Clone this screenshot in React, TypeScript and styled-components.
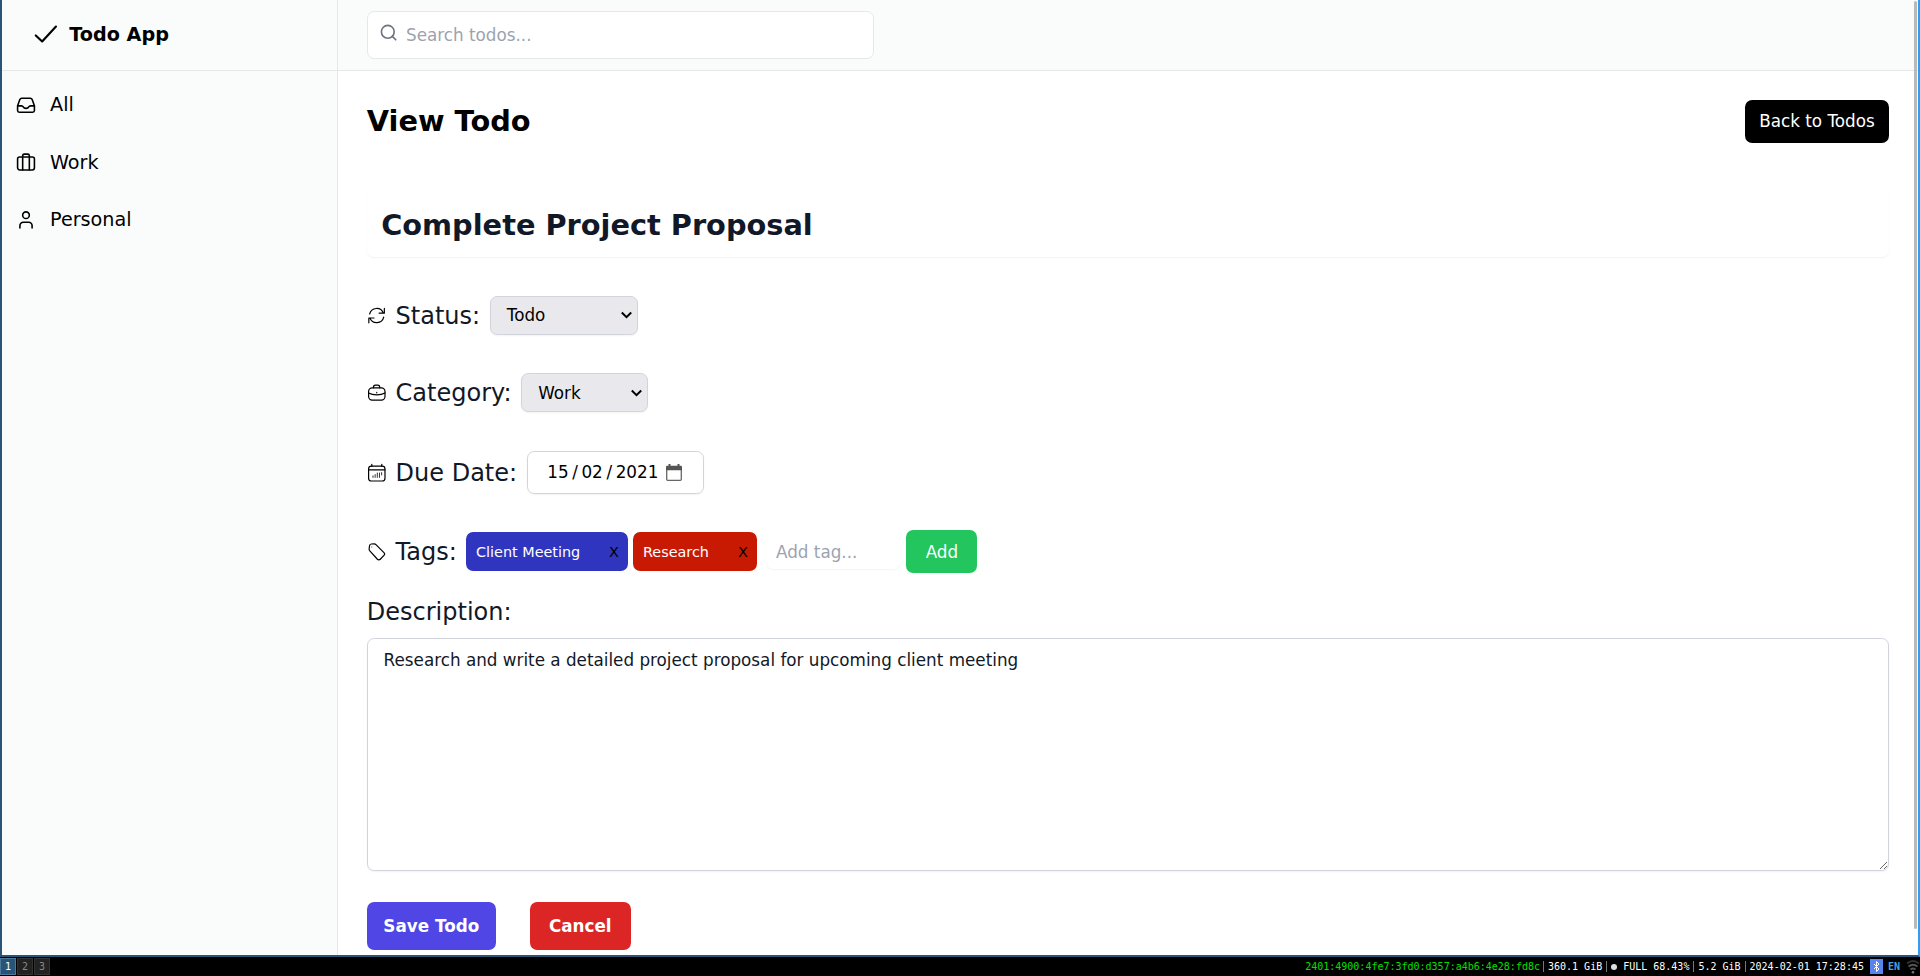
import React from 'react';
import styled, { createGlobalStyle, css } from 'styled-components';

const GlobalStyle = createGlobalStyle`
  *, *::before, *::after { box-sizing: border-box; }
  html, body { margin: 0; padding: 0; }
  body { background: #000; overflow: hidden; }
  body, button, input, textarea { font-family: "DejaVu Sans", sans-serif; }
`;

const Desktop = styled.div`
  display: flex;
  flex-direction: column;
  width: 1920px;
  height: 976px;
`;

const Window = styled.div`
  display: flex;
  height: 957px;
  border: solid #285577;
  border-width: 0 2px 2px;
  border-right-color: #2e9ef4;
  background: #fff;
  overflow: hidden;
`;

const Sidebar = styled.aside`
  width: 336px;
  border-right: 1px solid #e5e7eb;
  background: #fafcfb;
`;

const Brand = styled.div`
  display: flex;
  align-items: center;
  gap: 10px;
  height: 71px;
  padding: 0 0 1px 28.5px;
  border-bottom: 1px solid #e5e7eb;
  font-size: 19.2px;
  font-weight: 700;
`;

const Nav = styled.nav`
  display: flex;
  flex-direction: column;
  padding: 5px 0 0 13.5px;
`;

const NavItem = styled.a`
  display: flex;
  align-items: center;
  gap: 14.5px;
  height: 57.5px;
  font-size: 19.2px;
  color: #000;
`;

const Main = styled.main`
  flex: 1;
  min-width: 0;
`;

const Header = styled.header`
  height: 71px;
  padding: 11px 28.8px;
  border-bottom: 1px solid #e5e7eb;
  background: #fafcfb;
`;

const SearchBox = styled.div`
  display: flex;
  align-items: flex-start;
  gap: 8px;
  width: 507px;
  height: 48px;
  padding: 11px 0 0 11px;
  border: 1px solid #e5e7eb;
  border-radius: 7.2px;
  background: #fff;
  color: #6b7280;
`;

const SearchInput = styled.input`
  flex: 1;
  height: 23px;
  padding: 0;
  border: 0;
  outline: 0;
  background: transparent;
  font-size: 16.8px;
  &::placeholder { color: #9ca3af; }
`;

const Content = styled.div`
  padding: 29px 25px 0 28.8px;
`;

const TitleRow = styled.div`
  display: flex;
  align-items: center;
  justify-content: space-between;
  height: 43px;
`;

const Heading = styled.h1`
  margin: 0;
  padding-bottom: 2px;
  font-size: 28.8px;
  font-weight: 700;
`;

const Button = styled.button<{ $bg: string; $w: number; $h: number; $bold?: boolean; $raise?: number }>`
  width: ${p => p.$w}px;
  height: ${p => p.$h}px;
  padding: 0 0 ${p => p.$raise ?? 0}px;
  border: 0;
  border-radius: 7.2px;
  background: ${p => p.$bg};
  color: #fff;
  font-size: 16.8px;
  font-weight: ${p => (p.$bold ? 700 : 400)};
`;

const TitleCard = styled.h2`
  display: flex;
  align-items: center;
  height: 67px;
  margin: 47px 0 0;
  padding: 2px 14.4px 0;
  border-radius: 7.2px;
  box-shadow: 0 1px 2px rgba(0, 0, 0, 0.05);
  color: #111827;
  font-size: 28.8px;
`;

const Field = styled.div<{ $top: number; $h: number }>`
  display: flex;
  align-items: center;
  height: ${p => p.$h}px;
  margin-top: ${p => p.$top}px;
`;

const Label = styled.label`
  margin: 0 9.6px 0 9.6px;
  color: #111827;
  font-size: 24px;
  line-height: 34px;
  white-space: nowrap;
`;

const control = css`
  border: 1px solid #d1d5db;
  border-radius: 7.2px;
  box-shadow: 0 1px 2px rgba(0, 0, 0, 0.05);
`;

const Select = styled.div<{ $w: number; $raise?: number }>`
  ${control}
  display: flex;
  align-items: center;
  justify-content: space-between;
  width: ${p => p.$w}px;
  height: 39px;
  padding: 0 4px ${p => p.$raise ?? 0}px 16px;
  background: #e9e9ed;
  font-size: 16.8px;
`;

const DateBox = styled.div`
  ${control}
  display: flex;
  align-items: center;
  width: 177px;
  height: 43px;
  padding: 0 0 1px 19.5px;
  font-size: 16.8px;
  svg { margin-left: 8px; }
`;

const Slash = styled.span`
  margin: 0 3.6px;
`;

const Tag = styled.span<{ $bg: string; $w: number }>`
  display: flex;
  align-items: center;
  justify-content: space-between;
  width: ${p => p.$w}px;
  height: 39px;
  margin-right: 5px;
  padding: 0 9.6px;
  border-radius: 7.2px;
  background: ${p => p.$bg};
  color: #fff;
  font-size: 14.4px;
`;

const Remove = styled.span`
  color: #000;
`;

const TagInput = styled.input`
  width: 135px;
  height: 34px;
  margin: 0 5px 0 4px;
  padding: 0 9.6px;
  border: 0;
  border-radius: 7.2px;
  box-shadow: 0 1px 2px rgba(0, 0, 0, 0.05);
  font-size: 16.8px;
  &::placeholder { color: #9ca3af; }
`;

const DescriptionLabel = styled(Label)`
  display: block;
  margin: 22px 0 9px;
`;

const TextArea = styled.textarea`
  ${control}
  display: block;
  width: 100%;
  height: 233px;
  padding: 9px 15.8px;
  outline: 0;
  resize: vertical;
  color: #111827;
  font-size: 16.8px;
  line-height: 24px;
`;

const Actions = styled.div`
  display: flex;
  gap: 34px;
  margin-top: 31px;
`;

const ScrollTrack = styled.div`
  width: 4px;
  padding: 1px 1px 0 0;
  background: linear-gradient(#fafcfb 70px, #e5e7eb 70px, #e5e7eb 71px, #fff 71px);
`;

const ScrollThumb = styled.div`
  height: 928px;
  border-radius: 2px;
  background: #b9b9b9;
`;

const Bar = styled.footer`
  display: flex;
  align-items: center;
  justify-content: space-between;
  height: 19px;
  background: #000;
  color: #fff;
  font: 10px "DejaVu Sans Mono", monospace;
`;

const Workspaces = styled.div`
  display: flex;
  gap: 1px;
`;

const Workspace = styled.span<{ $active?: boolean }>`
  display: flex;
  align-items: center;
  justify-content: center;
  width: 16px;
  height: 17px;
  border: 1px solid ${p => (p.$active ? '#4c7899' : '#333')};
  background: ${p => (p.$active ? '#285577' : '#222')};
  color: ${p => (p.$active ? '#fff' : '#888')};
`;

const StatusLine = styled.div`
  display: flex;
  align-items: center;
  height: 19px;
  white-space: pre;
`;

const Address = styled.span`
  margin-right: -1px;
  color: #00e000;
`;

const Divider = styled.i`
  width: 1px;
  height: 11px;
  margin: 0 4px;
  background: #777;
`;

const Dot = styled.i`
  width: 6px;
  height: 6px;
  margin: 0 6px 0 0;
  border-radius: 50%;
  background: #ddd;
`;

const BluetoothIcon = styled.svg`
  margin-left: 6px;
`;

const Language = styled.span`
  margin: 0 6px 0 5px;
  color: #4ba3dc;
  font: 700 10px "DejaVu Sans Mono", monospace;
`;

const LineIcon = styled.svg`
  flex-shrink: 0;
`;

type IconProps = { size?: number; stroke?: number; children: React.ReactNode };
const Icon = ({ size = 19.2, stroke = 2, children }: IconProps) => (
  <LineIcon width={size} height={size} viewBox="0 0 24 24" fill="none" stroke="currentColor"
    strokeWidth={stroke} strokeLinecap="round" strokeLinejoin="round">
    {children}
  </LineIcon>
);

const Chevron = () => (
  <svg width="13" height="10" viewBox="0 0 13 10" fill="none" stroke="#000" strokeWidth="2">
    <path d="M1.8 2.500 6.500 7.200 11.200 2.500" />
  </svg>
);

export default function App() {
  return (
    <>
      <GlobalStyle />
      <Desktop>
        <Window>
          <Sidebar>
            <Brand>
              <Icon size={28.8} stroke={1.8}><path d="M4 12.900l5.300 5L20.800 5.500" /></Icon>
              Todo App
            </Brand>
            <Nav>
              <NavItem>
                <Icon size={20} stroke={1.9}>
                  <path d="M1.900 13v5.700a2 2 0 0 0 2 2h16.200a2 2 0 0 0 2-2V13l-2.700-7.500a2.500 2.500 0 0 0-2.300-1.600H6.900a2.500 2.500 0 0 0-2.300 1.600L1.900 13h4.600c1.300 0 1.800.5 2.200 1.300.6 1.200 1.500 1.700 3.300 1.700s2.700-.5 3.300-1.700c.4-.8.900-1.300 2.200-1.300h4.600" />
                </Icon>
                All
              </NavItem>
              <NavItem>
                <Icon size={20} stroke={1.9}>
                  <rect x="1.900" y="6" width="20.200" height="15.500" rx="2.500" />
                  <path d="M8 21.500V4.500a2 2 0 0 1 2-2h4a2 2 0 0 1 2 2v17" />
                </Icon>
                Work
              </NavItem>
              <NavItem>
                <Icon size={20} stroke={1.9}>
                  <circle cx="12" cy="6.200" r="4" />
                  <path d="M4.700 21.500v-2.800a4 4 0 0 1 4-4h6.600a4 4 0 0 1 4 4v2.800" />
                </Icon>
                Personal
              </NavItem>
            </Nav>
          </Sidebar>
          <Main>
            <Header>
              <SearchBox>
                <Icon><circle cx="11" cy="11" r="8" /><path d="m21 21-4.350-4.350" /></Icon>
                <SearchInput placeholder="Search todos..." />
              </SearchBox>
            </Header>
            <Content>
              <TitleRow>
                <Heading>View Todo</Heading>
                <Button $bg="#000" $w={144} $h={43} $raise={1}>Back to Todos</Button>
              </TitleRow>
              <TitleCard>Complete Project Proposal</TitleCard>
              <Field $top={39} $h={39}>
                <Icon stroke={1.5}>
                  <path d="M3.300 10a9 9 0 0 1 17.200-1M21.700 3V9h-6.500M20.900 14a9 9 0 0 1-17.200 1M2.300 21V15h6.500" />
                </Icon>
                <Label>Status:</Label>
                <Select $w={148} $raise={1}>Todo<Chevron /></Select>
              </Field>
              <Field $top={38} $h={39}>
                <Icon stroke={1.5}>
                  <rect x="2" y="6" width="20.500" height="15.500" rx="4.500" />
                  <path d="M8 6c0-2.600.800-3.300 2.500-3.300h3c1.700 0 2.500.7 2.500 3.300M2 12.500c3 1.700 6.500 2.300 10.200 2.300s7.300-.6 10.300-2.300M12.200 11.800v.5" />
                </Icon>
                <Label>Category:</Label>
                <Select $w={127}>Work<Chevron /></Select>
              </Field>
              <Field $top={39} $h={43}>
                <Icon stroke={1.5}>
                  <rect x="2" y="4" width="20.500" height="18.500" rx="3.500" />
                  <path d="M6 1.700V4M18.500 1.700V4M2 8.500h20.500" />
                  <path d="M7.500 16v2M10.200 14.500V18M12.900 12.500V18M15.600 12.500v5.500M18.300 12v3" strokeWidth="1" />
                </Icon>
                <Label>Due Date:</Label>
                <DateBox>
                  15<Slash>/</Slash>02<Slash>/</Slash>2021
                  <svg width="16" height="17" viewBox="0 0 16 17">
                    <path d="M.7 5V15.300a1 1 0 0 0 1 1H14.300a1 1 0 0 0 1-1V5" fill="none" stroke="#666" strokeWidth="1.300" />
                    <path d="M0 3a1.300 1.300 0 0 1 1.300-1.300H2.500V0h2v1.700h7V0h2v1.700h1.200A1.300 1.300 0 0 1 16 3v3.300H0z" fill="#555" />
                  </svg>
                </DateBox>
              </Field>
              <Field $top={36} $h={43}>
                <Icon stroke={1.5}>
                  <path d="M2.700 8.500 3.200 4.700A2.500 2.500 0 0 1 5.400 2.500L9 2.400a3 3 0 0 1 2.200.9l10 10a2.500 2.500 0 0 1 0 3.500l-4.600 4.800a2.500 2.500 0 0 1-3.600 0L3.500 11A3 3 0 0 1 2.700 8.500Z" />
                  <path d="M6.400 6.200h.008v.008H6.400z" strokeWidth="1.100" />
                </Icon>
                <Label>Tags:</Label>
                <Tag $bg="#2f35bf" $w={162}>Client Meeting<Remove>X</Remove></Tag>
                <Tag $bg="#c81a03" $w={124}>Research<Remove>X</Remove></Tag>
                <TagInput placeholder="Add tag..." />
                <Button $bg="#22c55e" $w={71} $h={43}>Add</Button>
              </Field>
              <DescriptionLabel>Description:</DescriptionLabel>
              <TextArea defaultValue="Research and write a detailed project proposal for upcoming client meeting" />
              <Actions>
                <Button $bg="#4f46e5" $w={129} $h={48} $bold>Save Todo</Button>
                <Button $bg="#dc2626" $w={101} $h={48} $bold>Cancel</Button>
              </Actions>
            </Content>
          </Main>
          <ScrollTrack><ScrollThumb /></ScrollTrack>
        </Window>
        <Bar>
          <Workspaces>
            <Workspace $active>1</Workspace>
            <Workspace>2</Workspace>
            <Workspace>3</Workspace>
          </Workspaces>
          <StatusLine>
            <Address>2401:4900:4fe7:3fd0:d357:a4b6:4e28:fd8c</Address>
            <Divider />360.1 GiB<Divider />
            <Dot />FULL 68.43%<Divider />5.2 GiB<Divider />2024-02-01 17:28:45
            <BluetoothIcon width="13" height="15" viewBox="0 0 13 15">
              <rect width="13" height="15" fill="#5b83ee" />
              <path d="m4 5 5 5-2.500 2.500v-10L9 5l-5 5" fill="none" stroke="#fff" />
            </BluetoothIcon>
            <Language>EN</Language>
            <svg width="14" height="15" viewBox="0 0 14 15" fill="none" stroke="#555" strokeWidth="1.800">
              <path d="M1 4.500Q7-.5 13 4.500" stroke="#333" />
              <path d="M2.500 7.500q4.500-3.500 9 0M4.500 10.500q2.500-2 5 0" />
              <circle cx="7" cy="13.300" r="1.300" fill="#777" stroke="none" />
            </svg>
          </StatusLine>
        </Bar>
      </Desktop>
    </>
  );
}
